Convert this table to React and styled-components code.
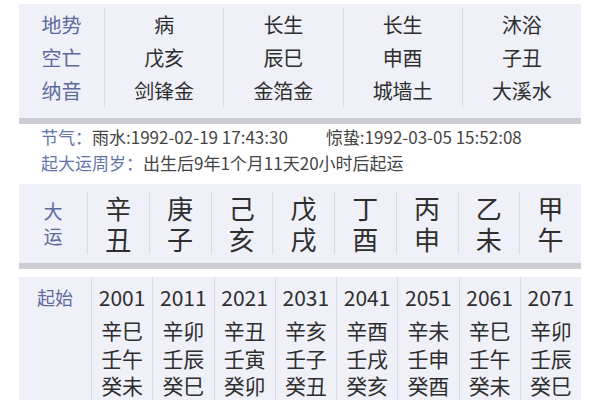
import React from "react";
import styled, { createGlobalStyle } from "styled-components";

const Global = createGlobalStyle`
  html, body { margin: 0; padding: 0; background: #ffffff; }
  body { font-family: "Noto Sans CJK SC", "Noto Sans", sans-serif; }
`;

const Page = styled.div`
  width: 562px;
  margin: 0 19px;
  padding-top: 4px;
  display: flex;
  flex-direction: column;
`;

const Panel = styled.div`
  background: #eff0f8;
  border-bottom: ${(p) => (p.$bar ? "6px solid #cbccd4" : "none")};
  display: grid;
  grid-template-columns: ${(p) => p.$cols};
  padding: ${(p) => p.$pad || "0"};
`;

const Col = styled.div`
  display: flex;
  flex-direction: column;
  align-items: center;
  justify-content: ${(p) => p.$justify || "center"};
  border-left: ${(p) => (p.$first ? "none" : "1px solid #d9dae3")};
`;

const Cell = styled.div`
  height: ${(p) => p.$h}px;
  line-height: ${(p) => p.$h}px;
  font-size: ${(p) => p.$size}px;
  color: ${(p) => (p.$label ? "#5d6b9c" : "#2e2e2e")};
  white-space: nowrap;
`;

const Info = styled.div`
  padding: 0 0 0 22px;
  display: flex;
  flex-direction: column;
  margin-bottom: 8px;
`;

const InfoLine = styled.div`
  height: 26px;
  line-height: 26px;
  font-size: 17px;
  color: #444;
  white-space: nowrap;
`;

const InfoLabel = styled.span`
  color: #6474a8;
`;

const Gap = styled.span`
  display: inline-block;
  width: ${(p) => p.$w}px;
`;

const Spacer = styled.div`
  height: ${(p) => p.$h}px;
`;

const topRows = [
  ["地势", "空亡", "纳音"],
  ["病", "戊亥", "剑锋金"],
  ["长生", "辰巳", "金箔金"],
  ["长生", "申酉", "城墙土"],
  ["沐浴", "子丑", "大溪水"],
];

const dayun = [
  ["辛", "丑"], ["庚", "子"], ["己", "亥"], ["戊", "戌"],
  ["丁", "酉"], ["丙", "申"], ["乙", "未"], ["甲", "午"],
];

const starts = [
  ["2001", "辛巳", "壬午", "癸未"],
  ["2011", "辛卯", "壬辰", "癸巳"],
  ["2021", "辛丑", "壬寅", "癸卯"],
  ["2031", "辛亥", "壬子", "癸丑"],
  ["2041", "辛酉", "壬戌", "癸亥"],
  ["2051", "辛未", "壬申", "癸酉"],
  ["2061", "辛巳", "壬午", "癸未"],
  ["2071", "辛卯", "壬辰", "癸巳"],
];

export default function App() {
  return (
    <>
      <Global />
      <Page>
        <Panel $bar $cols="85px repeat(4, 1fr)" $pad="4px 0 11px 0">
          {topRows.map((col, i) => (
            <Col key={i} $first={i === 0}>
              {col.map((t, j) => (
                <Cell key={j} $h={33} $size={20} $label={i === 0}>
                  {t}
                </Cell>
              ))}
            </Col>
          ))}
        </Panel>
        <Info>
          <InfoLine>
            <InfoLabel>节气：</InfoLabel>雨水:1992-02-19 17:43:30
            <Gap $w={38} />
            惊蛰:1992-03-05 15:52:08
          </InfoLine>
          <InfoLine>
            <InfoLabel>起大运周岁：</InfoLabel>出生后9年1个月11天20小时后起运
          </InfoLine>
        </Info>
        <Panel $bar $cols="68px repeat(8, 1fr)" $pad="8px 0 9px 0">
          <Col $first>
            <Cell $h={25} $size={19} $label>大</Cell>
            <Cell $h={25} $size={19} $label>运</Cell>
          </Col>
          {dayun.map((d, i) => (
            <Col key={i}>
              <Cell $h={31} $size={26}>{d[0]}</Cell>
              <Cell $h={31} $size={26}>{d[1]}</Cell>
            </Col>
          ))}
        </Panel>
        <Spacer $h={8} />
        <Panel $cols="72px repeat(8, 1fr)">
          <Col $first $justify="flex-start">
            <Cell $h={40} $size={18} $label>起始</Cell>
          </Col>
          {starts.map((s, i) => (
            <Col key={i} $justify="flex-start">
              <Cell $h={40} $size={21}>{s[0]}</Cell>
              <Cell $h={27.5} $size={21}>{s[1]}</Cell>
              <Cell $h={27.5} $size={21}>{s[2]}</Cell>
              <Cell $h={27.5} $size={21}>{s[3]}</Cell>
            </Col>
          ))}
        </Panel>
      </Page>
    </>
  );
}
